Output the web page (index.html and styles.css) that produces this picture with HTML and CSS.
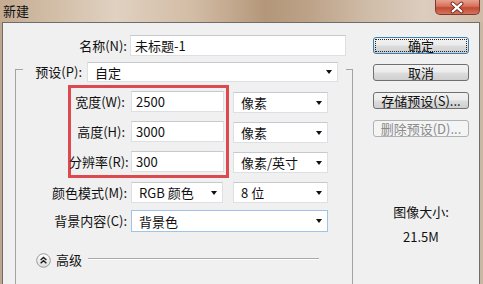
FILE: index.html
```html
<html>

<head>
  <meta charset="UTF-8">
  <title>新建</title>
  <link rel="stylesheet" href="styles.css">
</head>

<body>
  <div class="window">
    <div class="titlebar">
      <span class="title">新建</span>
      <span class="close">
        <svg width="45" height="15" viewBox="0 0 45 15">
          <path d="M18 3.5 L27 11.5 M27 3.5 L18 11.5" stroke="#6b1d12" stroke-width="4" stroke-linecap="round"/>
          <path d="M18 3.5 L27 11.5 M27 3.5 L18 11.5" stroke="#fff" stroke-width="2.2" stroke-linecap="round"/>
        </svg>
      </span>
    </div>

    <div class="client">
      <div class="main">
        <!-- 名称 -->
        <div class="row name-row">
          <label class="lbl name-lbl">名称(N):</label>
          <div class="field name-field">未标题-1</div>
        </div>

        <div class="group">
          <div class="group-head">
            <label class="lbl head-lbl">预设(P):</label>
            <div class="select preset-select"><span>自定</span><i class="arrow"></i></div>
          </div>

          <div class="dims">
            <div class="redbox">
              <div class="row">
                <label class="lbl dim-lbl">宽度(W):</label>
                <div class="field dim-field">2500</div>
              </div>
              <div class="row">
                <label class="lbl dim-lbl">高度(H):</label>
                <div class="field dim-field">3000</div>
              </div>
              <div class="row">
                <label class="lbl dim-lbl">分辨率(R):</label>
                <div class="field dim-field">300</div>
              </div>
            </div>
            <div class="units">
              <div class="select unit-select"><span>像素</span><i class="arrow"></i></div>
              <div class="select unit-select"><span>像素</span><i class="arrow"></i></div>
              <div class="select unit-select"><span>像素/英寸</span><i class="arrow"></i></div>
            </div>
          </div>

          <div class="row color-row">
            <label class="lbl group-lbl">颜色模式(M):</label>
            <div class="select mode-select"><span>RGB 颜色</span><i class="arrow"></i></div>
            <div class="select bits-select"><span>8 位</span><i class="arrow"></i></div>
          </div>

          <div class="row bg-row">
            <label class="lbl group-lbl">背景内容(C):</label>
            <div class="select bg-select"><span>背景色</span><i class="arrow"></i></div>
          </div>

          <div class="adv-row">
            <svg class="adv-btn" width="15" height="15" viewBox="0 0 15 15">
              <defs>
                <linearGradient id="cg" x1="0" y1="0" x2="0" y2="1">
                  <stop offset="0" stop-color="#ffffff"/>
                  <stop offset="1" stop-color="#dcdcdc"/>
                </linearGradient>
              </defs>
              <circle cx="7.5" cy="7.5" r="6.8" fill="url(#cg)" stroke="#9a9a9a" stroke-width="1"/>
              <path d="M4.6 7 L7.5 4.4 L10.4 7 M4.6 10.3 L7.5 7.7 L10.4 10.3" fill="none" stroke="#1a1a1a" stroke-width="1.4"/>
            </svg>
            <span class="adv-text">高级</span>
            <span class="adv-line"></span>
          </div>
        </div>
      </div>

      <div class="side">
        <button class="btn focused"><span>确定</span></button>
        <button class="btn">取消</button>
        <button class="btn">存储预设(S)...</button>
        <button class="btn disabled">删除预设(D)...</button>
        <div class="size-lbl">图像大小:</div>
        <div class="size-val">21.5M</div>
      </div>
    </div>
  </div>
</body>

</html>
```

FILE: styles.css
```css
* {
  margin: 0;
  padding: 0;
  box-sizing: border-box;
  font-family: "Noto Sans CJK SC", "Noto Sans", sans-serif;
}

body {
  width: 483px;
  height: 284px;
  overflow: hidden;
  background: #c4ad95;
  color: #111;
  font-size: 13px;
}

.window {
  height: 284px;
  display: flex;
  flex-direction: column;
  overflow: hidden;
  background: linear-gradient(90deg, #bfa78e 0%, #c8b39c 60%, #c9b7a4 100%);
}

.titlebar {
  height: 22px;
  flex: none;
  display: flex;
  justify-content: space-between;
  align-items: flex-start;
  background: linear-gradient(90deg, #c4ab91 0%, #d3bfa9 12%, #e0d1c1 24%, #d2bca5 40%, #b4977a 55%, #bda288 64%, #cfbca8 76%, #dccdbf 88%, #cfbba7 100%);
}

.title {
  padding: 3px 0 0 3px;
  line-height: 16px;
  font-size: 13px;
  color: #111;
}

.close {
  width: 45px;
  height: 15px;
  margin-right: 3px;
  border: 1px solid #7e3a2c;
  border-top: none;
  border-radius: 0 0 5px 5px;
  background: linear-gradient(180deg, #e7a18f 0%, #d6705a 45%, #c24a33 55%, #d5735c 100%);
  display: flex;
  overflow: hidden;
}

.close svg {
  margin-left: -1px;
}

.client {
  flex: 1;
  min-height: 0;
  overflow: hidden;
  margin: 0 3px 0 2px;
  border: 1px solid #6d6d6d;
  border-bottom: none;
  background: #f0f0f0;
  display: flex;
}

.main {
  width: 359px;
  flex: none;
}

.row {
  display: flex;
  align-items: center;
  height: 21px;
}

.lbl {
  text-align: right;
  line-height: 16px;
  white-space: nowrap;
  flex: none;
}

.field,
.select {
  height: 21px;
  background: #fff;
  border: 1px solid #dcdfe3;
  border-top-color: #c6c9cd;
  line-height: 19px;
  white-space: nowrap;
  flex: none;
}

.field {
  padding-left: 4px;
}

.select {
  display: flex;
  align-items: center;
  padding: 0 5px 0 7px;
}

.arrow {
  margin-left: auto;
  width: 0;
  height: 0;
  border-left: 3.5px solid transparent;
  border-right: 3.5px solid transparent;
  border-top: 4px solid #111;
}

/* 名称 */
.name-row {
  margin-top: 12px;
}

.name-lbl {
  width: 124px;
}

.name-field {
  margin-left: 3px;
  width: 216px;
}

/* 预设分组 */
.group {
  margin: 13px 0 0 12px;
  width: 338px;
  height: 215px;
  border: 1px solid #a3a3a3;
  border-bottom: none;
}

.group-head {
  margin: -8px 0 0 7px;
  width: 323px;
  height: 20px;
  display: flex;
  align-items: center;
  background: #f0f0f0;
}

.head-lbl {
  width: 59px;
}

.preset-select {
  margin-left: 5px;
  width: 251px;
  height: 20px;
}

.dims {
  display: flex;
  margin: 3px 0 0 52px;
}

.redbox {
  width: 161px;
  border: 3px solid #dc4a50;
  padding: 3px 2px 3px 0;
  display: flex;
  flex-direction: column;
  gap: 9px;
}

.dim-lbl {
  width: 56px;
  margin-left: -2px;
}

.dim-field {
  margin-left: 6px;
  width: 93px;
}

.units {
  margin: 7px 0 0 4px;
  display: flex;
  flex-direction: column;
  gap: 9px;
}

.unit-select {
  width: 95px;
}

.group-lbl {
  width: 111px;
}

.color-row {
  margin-top: 4px;
}

.mode-select {
  margin-left: 4px;
  width: 92px;
}

.bits-select {
  margin-left: 10px;
  width: 95px;
}

.bg-row {
  margin-top: 7px;
  height: 22px;
}

.bg-select {
  margin-left: 4px;
  width: 197px;
  height: 22px;
  border-color: #9fc4e6;
}

.adv-row {
  margin: 20px 0 0 20px;
  display: flex;
  align-items: center;
  height: 16px;
}

.adv-btn {
  flex: none;
}

.adv-text {
  margin-left: 5px;
  line-height: 16px;
}

.adv-line {
  flex: 1;
  margin: 0 33px 2px 6px;
  height: 2px;
  border-top: 1px solid #aaaaaa;
  border-bottom: 1px solid #ffffff;
}

/* 右侧按钮 */
.side {
  flex: 1;
  padding: 14px 0 0 11px;
  display: flex;
  flex-direction: column;
}

.btn {
  width: 96px;
  height: 17px;
  margin-bottom: 10px;
  border: 1px solid #707070;
  border-radius: 3px;
  background: linear-gradient(180deg, #f3f3f3 0%, #ebebeb 48%, #dddddd 52%, #cfcfcf 100%);
  font-size: 13px;
  line-height: 14px;
  color: #111;
  display: flex;
  align-items: center;
  justify-content: center;
  flex: none;
}

.btn + .btn {
  margin-bottom: 11px;
}

.btn.focused {
  border-color: #3c7fb1;
  padding: 1px;
}

.btn.focused span {
  width: 100%;
  height: 100%;
  border: 1px dotted #222;
  display: flex;
  align-items: center;
  justify-content: center;
}

.btn.disabled {
  border-color: #adb2b5;
  background: #f4f4f4;
  color: #8a8a8a;
}

.size-lbl,
.size-val {
  width: 96px;
  text-align: center;
  line-height: 16px;
}

.size-lbl {
  margin-top: 56px;
}

.size-val {
  margin-top: 9px;
}
```
